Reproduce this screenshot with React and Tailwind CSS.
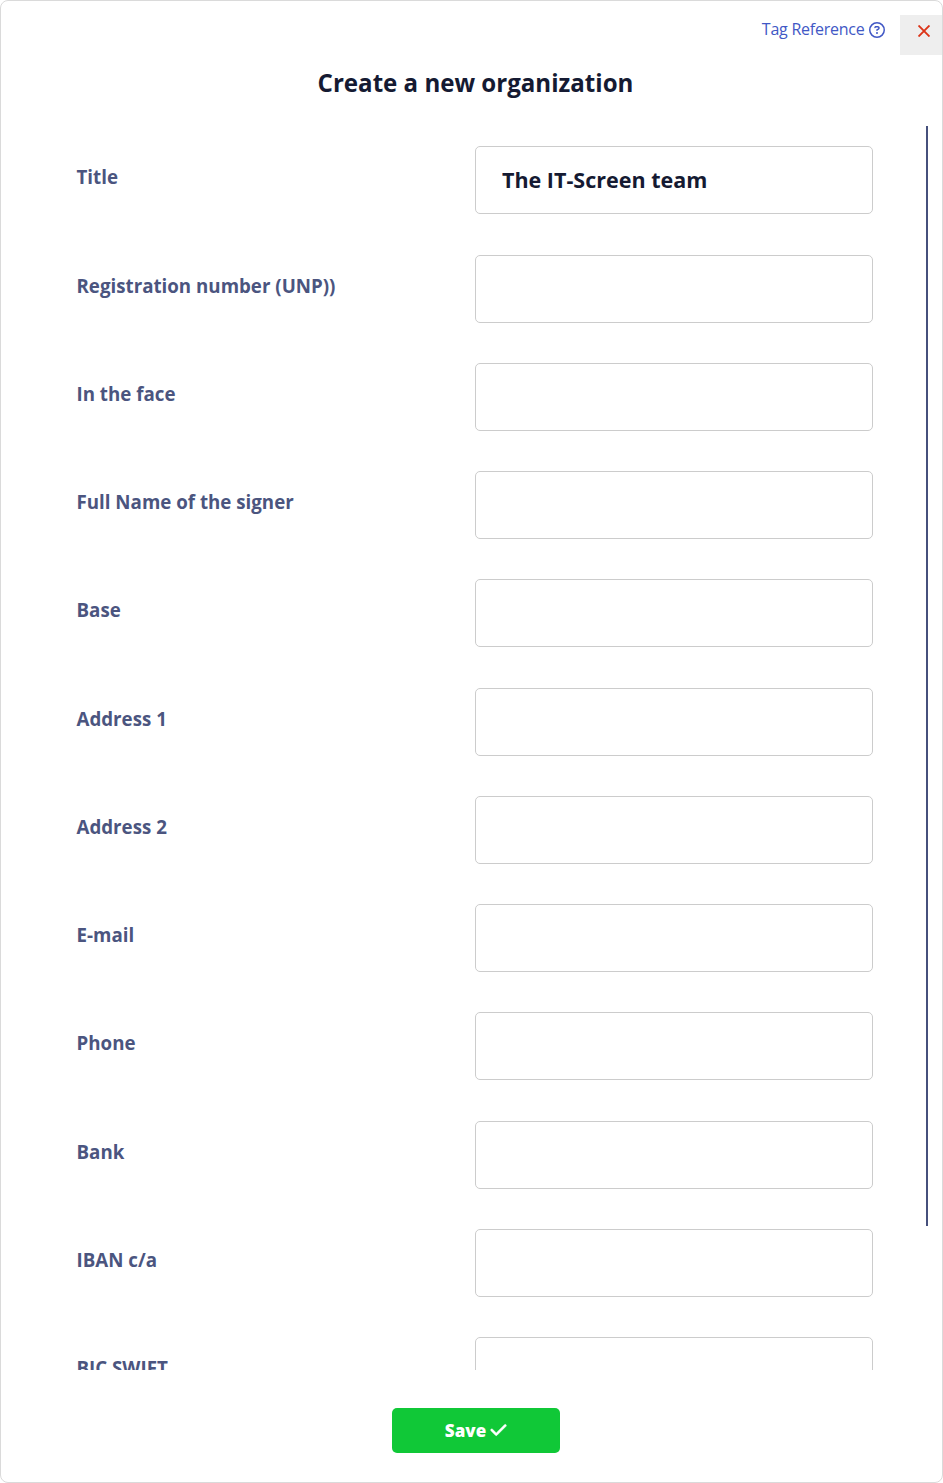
import React, { useState } from 'react';
import { FaCheck, FaRegCircleQuestion } from 'react-icons/fa6';

const FIELDS = [
  { name: 'title', label: 'Title' },
  { name: 'unp', label: 'Registration number (UNP))' },
  { name: 'face', label: 'In the face' },
  { name: 'signer', label: 'Full Name of the signer' },
  { name: 'base', label: 'Base' },
  { name: 'address1', label: 'Address 1' },
  { name: 'address2', label: 'Address 2' },
  { name: 'email', label: 'E-mail' },
  { name: 'phone', label: 'Phone' },
  { name: 'bank', label: 'Bank' },
  { name: 'iban', label: 'IBAN c/a' },
  { name: 'bic', label: 'BIC SWIFT' },
];

function Field({ name, label, value, onChange }) {
  return (
    <div className="flex h-[68px] shrink-0 items-start">
      <label htmlFor={name} className="-ml-[0.5px] w-[398.5px] pt-[18px] text-[18.73px] leading-[26px] font-bold text-[#4b557f]">
        {label}
      </label>
      <input
        id={name}
        name={name}
        value={value}
        onChange={onChange}
        className="h-[68px] w-[398px] rounded-[5px] border border-[#cccccc] bg-white px-[26px] pb-[2px] text-[21.5px] font-bold text-[#151a32] outline-none focus:border-[#4158c5]"
      />
    </div>
  );
}

export default function App() {
  const [values, setValues] = useState({ title: 'The IT-Screen team' });

  const handleChange = (e) => {
    setValues({ ...values, [e.target.name]: e.target.value });
  };

  return (
    <div className="flex h-screen w-full flex-col rounded-lg border border-[#dadada] bg-white font-['Open_Sans',sans-serif]">
      {/* Top bar */}
      <div className="flex h-[54px] shrink-0 items-start justify-end pt-[14px]">
        <a href="#" className="mr-[15.5px] flex items-center gap-1 text-base leading-[28px] tracking-[-0.24px] text-[#4158c5]">
          Tag Reference
          <FaRegCircleQuestion className="mt-[2px] h-4 w-4" />
        </a>
        <button type="button" aria-label="Close" className="flex h-10 w-[42px] items-start justify-center bg-[#eeeeee] pt-[10px] pl-[6px]">
          <svg className="h-3 w-3" viewBox="0 0 12 12" fill="none" stroke="#dc3418" strokeWidth="1.9">
            <path d="M0.5 0.5 11.5 11.5M11.5 0.5 0.5 11.5" />
          </svg>
        </button>
      </div>

      <h1 className="h-[71px] shrink-0 pt-[11px] pl-[8px] text-center text-[24.1px] leading-[34px] font-bold text-[#151a32]">
        Create a new organization
      </h1>

      {/* Scrollable list of fields */}
      <div className="flex h-[1244px] shrink-0 justify-between overflow-hidden pr-[14px] pl-[76px]">
        <div className="flex flex-col gap-[40.24px] pt-[20.4px]">
          {FIELDS.map((field) => (
            <Field
              key={field.name}
              name={field.name}
              label={field.label}
              value={values[field.name] || ''}
              onChange={handleChange}
            />
          ))}
        </div>
        <div className="h-[1100px] w-[2px] bg-[#46507c]" />
      </div>

      <div className="flex justify-center pt-[38px] pl-[9px]">
        <button type="button" className="flex h-[45px] w-[168px] items-center justify-center gap-1 rounded-[5px] bg-[#10c837] text-[17px] font-extrabold text-white">
          Save
          <FaCheck className="mb-px h-[18px] w-[17px]" stroke="currentColor" strokeWidth="14" />
        </button>
      </div>
    </div>
  );
}
